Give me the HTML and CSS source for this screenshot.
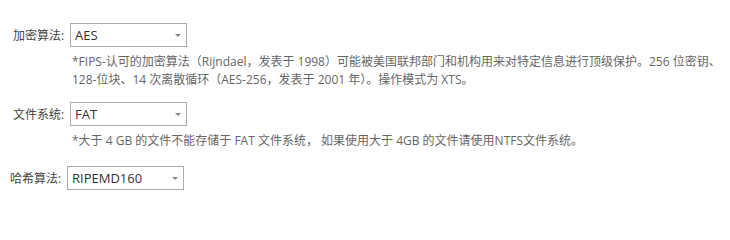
FILE: index.html
```html
<!DOCTYPE html>
<html lang="zh-CN">
<head>
<meta charset="utf-8">
<link rel="stylesheet" href="styles.css">
</head>
<body>
<div class="form">
  <div class="field">
    <div class="row">
      <label class="label">加密算法:</label>
      <div class="select"><span class="value">AES</span><span class="arrow"></span></div>
    </div>
    <p class="note">*FIPS-认可的加密算法（Rijndael，发表于 1998）可能被美国联邦部门和机构用来对特定信息进行顶级保护。256 位密钥、128-位块、14 次离散循环（AES-256，发表于 2001 年）。操作模式为 XTS。</p>
  </div>
  <div class="field field-fs">
    <div class="row">
      <label class="label">文件系统:</label>
      <div class="select"><span class="value">FAT</span><span class="arrow"></span></div>
    </div>
    <p class="note">*大于 4 GB 的文件不能存储于 FAT 文件系统， 如果使用大于 4GB 的文件请使用NTFS文件系统。</p>
  </div>
  <div class="field field-hash">
    <div class="row row-hash">
      <label class="label">哈希算法:</label>
      <div class="select"><span class="value">RIPEMD160</span><span class="arrow"></span></div>
    </div>
  </div>
</div>
</body>
</html>
```
FILE: styles.css
```css
html, body {
  margin: 0;
  padding: 0;
  background: #ffffff;
}
body {
  font-family: "Open Sans", "Noto Sans CJK SC", sans-serif;
  color: #444;
}
.form {
  padding-top: 23px;
  display: flex;
  flex-direction: column;
}
.row {
  display: flex;
  align-items: center;
  padding-left: 13px;
  height: 24px;
}
.row-hash {
  padding-left: 10px;
}
.label {
  font-size: 12px;
  color: #444;
  width: 57px;
  white-space: nowrap;
}
.select {
  box-sizing: border-box;
  width: 117px;
  height: 24px;
  border: 1px solid #aaa;
  display: flex;
  align-items: center;
  justify-content: space-between;
  padding: 0 5px 0 4px;
  background: #fff;
}
.value {
  font-size: 13px;
  color: #333;
}
.arrow {
  width: 0;
  height: 0;
  border-left: 3px solid transparent;
  border-right: 3px solid transparent;
  border-top: 3px solid #888;
  margin-top: 1px;
}
.note {
  margin: 6px 0 0 72px;
  width: 650px;
  font-size: 12px;
  line-height: 18px;
  color: #666;
}
.field-fs {
  margin-top: 13px;
}
.field-hash {
  margin-top: 16px;
}
```
